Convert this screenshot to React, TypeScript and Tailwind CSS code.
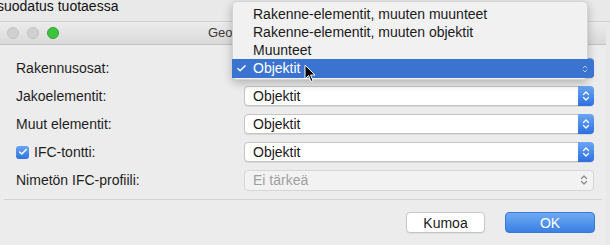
import { Check } from 'lucide-react';

const font = { fontFamily: '"Helvetica Neue", "Liberation Sans", Arial, sans-serif' };

const Chevrons = ({ className }: { className: string }) => (
  <svg width="8" height="12" viewBox="0 0 8 12" className={className}>
    <path d="M1.5 4.5 L4 2 L6.5 4.5 M1.5 7.5 L4 10 L6.5 7.5" fill="none" stroke="currentColor" strokeWidth="1.3" strokeLinecap="round" strokeLinejoin="round" />
  </svg>
);

const Popup = ({ value, disabled }: { value: string; disabled?: boolean }) =>
  disabled ? (
    <div className="h-[21px] w-[350px] flex items-center rounded-[4px] border border-[#d6d6d6] bg-[#f2f2f2] pl-[8px] pr-[5px]">
      <span className="flex-1 text-[14px] text-[#a0a0a0]">{value}</span>
      <Chevrons className="text-[#8a8a8a]" />
    </div>
  ) : (
    <div className="h-[20px] w-[350px] flex items-stretch rounded-[4px] border border-[#c4c4c4] bg-white shadow-[0_1px_0_rgba(0,0,0,0.08)]">
      <span className="flex-1 pl-[8px] text-[14px] leading-[18px] text-[#1a1a1a]">{value}</span>
      <div className="w-[16px] -my-px -mr-px rounded-r-[4px] bg-gradient-to-b from-[#6aa6f4] to-[#2d6fdf] flex items-center justify-center">
        <Chevrons className="text-white" />
      </div>
    </div>
  );

const Row = ({ label, children }: { label: React.ReactNode; children: React.ReactNode }) => (
  <div className="h-[28px] flex items-center">
    <div className="w-[244px] pl-[16px] text-[14px] text-[#1e1e1e]">{label}</div>
    {children}
  </div>
);

const TrafficLight = ({ color }: { color: string }) => (
  <div className={`w-[12px] h-[12px] rounded-full ${color}`} />
);

export default function App() {
  return (
    <div className="relative w-[610px] h-[245px] overflow-hidden bg-[#e9e9e9]" style={font}>
      {/* back window */}
      <div className="h-[22px] -ml-[3px] text-[14px] leading-[13px] text-[#111] border-b border-[#d0d0d0]">
        suodatus tuotaessa
      </div>

      {/* dialog */}
      <div className="bg-[#ececec] mr-[4px] h-[223px] flex flex-col">
        <div className="h-[23px] flex items-center bg-gradient-to-b from-[#ececec] to-[#d9d9d9] border-b border-[#c2c2c2] relative">
          <div className="flex gap-[8px] pl-[7px]">
            <TrafficLight color="bg-[#d0d0d0] border border-[#c4c4c4]" />
            <TrafficLight color="bg-[#d0d0d0] border border-[#c4c4c4]" />
            <TrafficLight color="bg-[#3cc43f] border border-[#2fa533]" />
          </div>
          <div className="pl-[149px] text-[13px] text-[#3a3a3a]">Geometrian suodatus</div>
        </div>

        <div className="pt-[9px] flex flex-col">
          <Row label="Rakennusosat:">
            <Popup value="Objektit" />
          </Row>
          <Row label="Jakoelementit:">
            <Popup value="Objektit" />
          </Row>
          <Row label="Muut elementit:">
            <Popup value="Objektit" />
          </Row>
          <Row
            label={
              <div className="flex items-center gap-[5px]">
                <div className="w-[13px] h-[13px] rounded-[3px] bg-gradient-to-b from-[#68a5f3] to-[#2f73e0] flex items-center justify-center">
                  <Check className="w-[10px] h-[10px] text-white" strokeWidth={3.5} />
                </div>
                <span>IFC-tontti:</span>
              </div>
            }
          >
            <Popup value="Objektit" />
          </Row>
          <Row label="Nimetön IFC-profiili:">
            <Popup value="Ei tärkeä" disabled />
          </Row>
        </div>

        <div className="mt-[5px] mx-[4px] border-t border-[#d2d2d2]" />

        <div className="flex justify-end gap-[20px] pr-[11px] pt-[12px]">
          <button className="w-[79px] h-[21px] rounded-[4px] border border-[#c6c6c6] bg-white text-[14px] text-[#1a1a1a] shadow-[0_1px_0_rgba(0,0,0,0.06)]">
            Kumoa
          </button>
          <button className="w-[90px] h-[21px] rounded-[4px] bg-gradient-to-b from-[#6eaaf3] to-[#3a7fe3] border border-[#3a78d6] text-[14px] text-white">
            OK
          </button>
        </div>
      </div>

      {/* open popup menu */}
      <div className="absolute left-[232px] top-[1px] w-[356px] h-[79px] rounded-[5px] bg-[#f1f1f1] border border-[#d4d4d4] shadow-[0_3px_10px_rgba(0,0,0,0.25)] pt-[3px] text-[14px] text-[#1a1a1a]">
        <div className="h-[18px] leading-[18px] pl-[20px]">Rakenne-elementit, muuten muunteet</div>
        <div className="h-[18px] leading-[18px] pl-[20px]">Rakenne-elementit, muuten objektit</div>
        <div className="h-[18px] leading-[18px] pl-[20px]">Muunteet</div>
        <div className="relative h-[19px] -ml-px -mr-[7px] rounded-r-[4px] bg-[#3b73d1] text-white flex items-center">
          <span className="w-[21px] pl-[4px] flex items-center">
            <Check className="w-[11px] h-[11px] text-white" strokeWidth={3} />
          </span>
          <span>Objektit</span>
          <Chevrons className="absolute right-[5px] top-[4px] scale-75 text-[#b8cdf0]" />
        </div>
      </div>

      {/* cursor */}
      <svg className="absolute left-[304px] top-[64px]" width="12" height="19" viewBox="0 0 12 19">
        <path d="M1 1 L1 15 L4.5 11.5 L7 17.5 L9 16.6 L6.6 11 L11 11 Z" fill="#000" stroke="#fff" strokeWidth="1" strokeLinejoin="round" />
      </svg>
    </div>
  );
}
